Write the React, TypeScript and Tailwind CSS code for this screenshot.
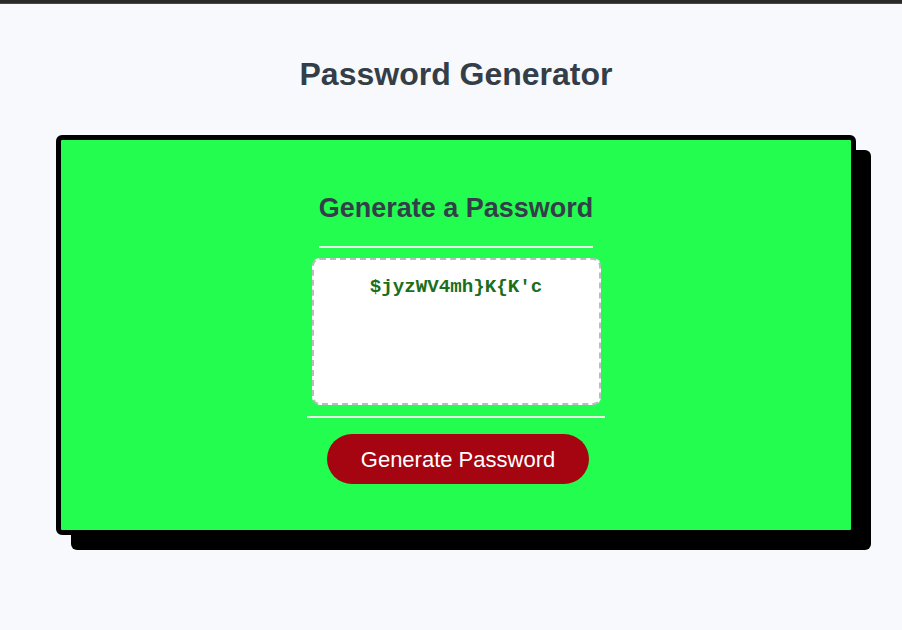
export default function App() {
  const password = "$jyzWV4mh}K{K'c";

  return (
    <div className="min-h-[630px] bg-[#f8f9fd] font-['Liberation_Sans',Arial,sans-serif]">
      <div className="h-[4px] bg-[#2a2a2a] border-b border-[#4a4a4a]" />
      <div className="flex flex-col items-center pl-[10px]">
        <h1 className="mt-[51px] text-[32px] leading-[38px] font-bold text-[#343e48]">
          Password Generator
        </h1>
        <div className="mt-[42px] w-[800px] h-[400px] border-[5px] border-black rounded-[6px] bg-[#22fd50] shadow-[15px_15px_0_0_#000] flex flex-col items-center">
          <h2 className="mt-[52px] pb-[22px] border-b-2 border-[#e6eee6] text-[27px] leading-[32px] font-bold text-[#343e48]">
            Generate a Password
          </h2>
          <textarea
            readOnly
            value={password}
            className="mt-[10px] w-[289px] h-[147px] resize-none bg-white border-2 border-dashed border-[#b9bcc0] rounded-[8px] pt-[16px] px-3 text-center text-[19.2px] leading-[22px] font-bold text-[#1b6e1b] font-['Liberation_Mono','Courier_New',monospace] outline-none"
          />
          <div className="mt-[11px] w-[298px] h-[2px] bg-[#e6eee6]" />
          <button className="mt-[16px] ml-[4px] w-[262px] h-[50px] rounded-full bg-[#a50411] text-white text-[22px]">
            Generate Password
          </button>
        </div>
      </div>
    </div>
  );
}
